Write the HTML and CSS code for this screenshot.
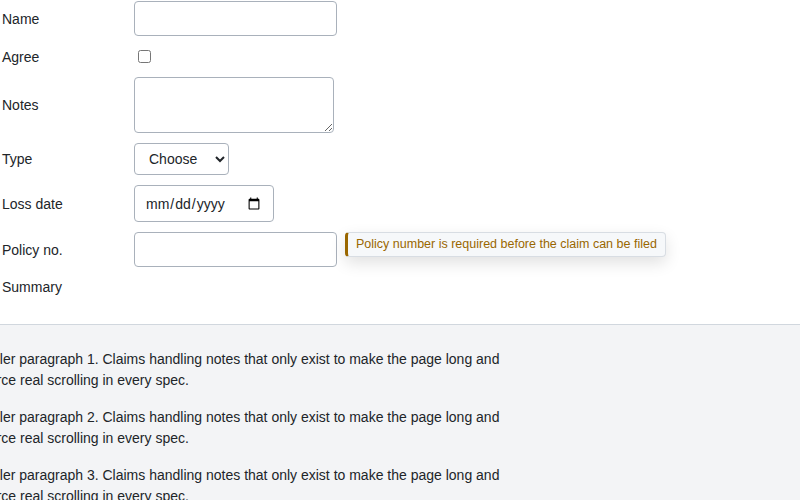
FILE: index.html
```html
<!DOCTYPE html>
<html lang="en">
<head>
<meta charset="utf-8">
<title>Claim form</title>
<link rel="stylesheet" href="styles.css">
</head>
<body>
<form class="claim-form">
  <div class="row">
    <label class="lbl" for="name">Name</label>
    <input class="field field-text" id="name" type="text">
  </div>
  <div class="row row-check">
    <label class="lbl" for="agree">Agree</label>
    <input class="check" id="agree" type="checkbox">
  </div>
  <div class="row">
    <label class="lbl" for="notes">Notes</label>
    <textarea class="field field-area" id="notes"></textarea>
  </div>
  <div class="row">
    <label class="lbl" for="type">Type</label>
    <select class="field field-select" id="type">
      <option>Choose</option>
    </select>
  </div>
  <div class="row">
    <label class="lbl" for="loss">Loss date</label>
    <input class="field field-date" id="loss" type="date">
  </div>
  <div class="row">
    <label class="lbl" for="policy">Policy no.</label>
    <div class="anchor">
      <input class="field field-text" id="policy" type="text">
      <div class="tip">Policy number is required before the claim can be filed</div>
    </div>
  </div>
  <div class="row">
    <span class="lbl">Summary</span>
  </div>
</form>
<section class="filler">
  <div class="filler-inner">
    <p>Filler paragraph 1. Claims handling notes that only exist to make the page long and force real scrolling in every spec.</p>
    <p>Filler paragraph 2. Claims handling notes that only exist to make the page long and force real scrolling in every spec.</p>
    <p>Filler paragraph 3. Claims handling notes that only exist to make the page long and force real scrolling in every spec.</p>
    <p>Filler paragraph 4. Claims handling notes that only exist to make the page long and force real scrolling in every spec.</p>
  </div>
</section>
</body>
</html>
```
FILE: styles.css
```css
html, body {
  margin: 0;
  padding: 0;
  background: #ffffff;
  overflow: hidden;
}
body {
  font-family: "Liberation Sans", Arial, sans-serif;
  font-size: 14px;
  color: #212529;
}
.claim-form {
  display: flex;
  flex-direction: column;
  gap: 10px;
  padding: 1px 0 27px 2px;
}
.row {
  display: flex;
  align-items: center;
  min-height: 20px;
}
.row-check {
  min-height: 21px;
}
.lbl {
  width: 132px;
  flex: none;
  line-height: 20px;
}
.field {
  box-sizing: border-box;
  font-family: "Liberation Sans", Arial, sans-serif;
  font-size: 14px;
  color: #212529;
  border: 1px solid #a9b1bb;
  border-radius: 4px;
  background: #fff;
  margin: 0;
}
.field-text {
  width: 203px;
  height: 35px;
  padding: 8px 10px;
}
.check {
  margin: 0 0 0 4px;
  width: 13px;
  height: 13px;
}
.field-area {
  width: 200px;
  height: 56px;
  padding: 8px 10px;
  resize: vertical;
  display: block;
}
.field-select {
  width: 95px;
  height: 32px;
  padding: 0 8px 0 10px;
}
.field-date {
  width: 140px;
  height: 37px;
  padding: 8px 10px;
}
.anchor {
  position: relative;
  display: flex;
}
.tip {
  position: absolute;
  left: 211px;
  top: 0;
  white-space: nowrap;
  font-size: 12.5px;
  line-height: 15px;
  color: #9a6700;
  background: #f6f8fa;
  border: 1px solid #d8dde3;
  border-left: 3px solid #9a6700;
  border-radius: 4px;
  padding: 4px 8px 4px 8px;
  box-shadow: 0 6px 16px rgba(0, 0, 0, 0.12);
}
.filler {
  border-top: 1px solid #d1d7de;
  background: #f3f4f6;
  padding: 8px 0 20px;
}
.filler-inner {
  margin-left: -15px;
  width: 530px;
}
.filler p {
  margin: 16px 0;
  line-height: 21px;
}
```
